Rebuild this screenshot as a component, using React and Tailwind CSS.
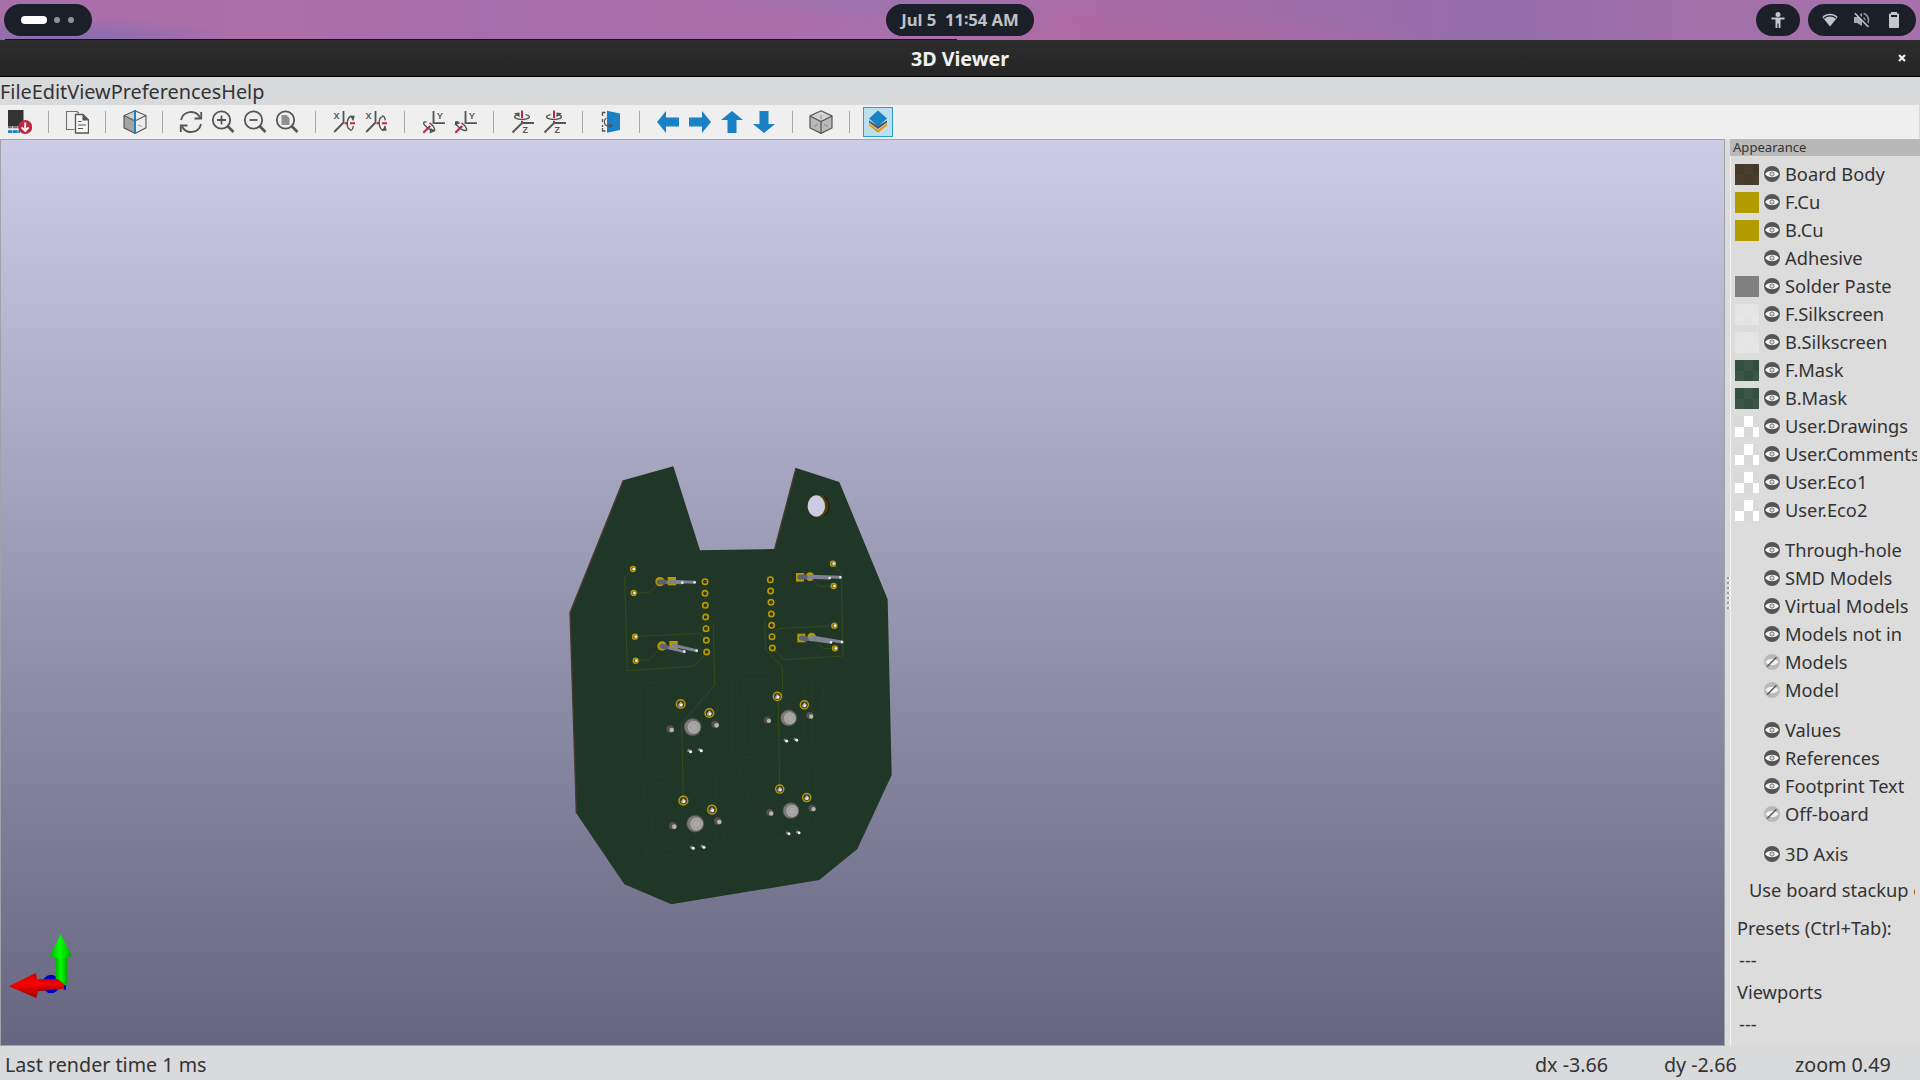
import React from "react";

const G = "#545454";
const RED = "#bf2641";
const BLUE = "#1a81c4";

function Icon({ children, className = "" }) {
  return (
    <svg width="24" height="24" viewBox="0 0 24 24" fill="none" className={"shrink-0 " + className}>
      {children}
    </svg>
  );
}

const ReloadBoard = () => (
  <Icon>
    <path d="M0 0H15.500V16H0Z" fill="#333" />
    <path d="M0 16H13V18.300H0Z" fill="#777" />
    <path d="M0 20.200H12V23H0Z" fill={BLUE} />
    <path d="M4.500 16V23M10 16V23" stroke="#efefef" strokeWidth=".6" />
    <circle cx="17.200" cy="17" r="7" fill={RED} />
    <path d="M17.200 12.500V20.500M13.700 17.300L17.200 20.800L20.700 17.300" stroke="#fff" strokeWidth="1.900" />
  </Icon>
);

const CopyDoc = () => (
  <Icon>
    <path d="M9.500 19.500H1.500V1.500H12L14 3.500" stroke="#707070" strokeWidth="1.100" />
    <path d="M10.500 4.500H18L23.500 10V23H10.500Z" fill="#f7f7f7" stroke={G} strokeWidth="1.300" />
    <path d="M17.500 4.500V10.500H23.500Z" fill={G} />
    <path d="M13 11.500H16.500M13 15H21M13 18.500H18" stroke={G} strokeWidth="1.100" />
  </Icon>
);

const RaytraceCube = () => (
  <Icon className="ml-px">
    <path d="M12 .8L23 5.500V17.800L12 23.400L1 17.800V5.500Z" fill="#ececec" />
    <path d="M1 5.500L12 11V23.400L1 17.800Z" fill="#a3a3a3" />
    <path d="M12 .8L1 5.500L12 11Z" fill="#cfcfcf" />
    <path d="M12 .8L23 5.500V17.800L12 23.400L1 17.800V5.500ZM1 5.500L12 11L23 5.500" stroke={G} strokeWidth="1.100" />
    <path d="M15 15L19 16.500" stroke="#999" />
    <path d="M12 0V24" stroke={BLUE} strokeWidth="2" />
  </Icon>
);

const Refresh = () => (
  <Icon>
    <path d="M2 10A10.200 10.200 0 0 1 21 7.500M22 14A10.200 10.200 0 0 1 3 16.500" stroke={G} strokeWidth="1.800" />
    <path d="M22.200 2V8.500H15.500M1.800 22V15.500H8.500" stroke={G} strokeWidth="1.800" />
  </Icon>
);

const Lens = ({ children }) => (
  <Icon>
    <circle cx="10.500" cy="10" r="8.700" stroke={G} strokeWidth="1.800" />
    <path d="M16.500 16L22.500 22" stroke={G} strokeWidth="2.600" />
    {children}
  </Icon>
);

const AxisText = ({ x, y, children }) => (
  <text x={x} y={y} fill={G} fontSize="9.500" fontWeight="600" fontFamily="'Noto Sans', sans-serif">{children}</text>
);

const RotX = ({ flip }) => (
  <Icon className="ml-0.5">
    <path d="M10.500 1V13M10.500 12.500L1.200 22" stroke={G} strokeWidth="1.800" />
    <path d="M11.500 13.200H14.500M17 13.200H22" stroke={RED} strokeWidth="1.900" />
    <g transform={flip ? "matrix(1 0 0 -1 0 26.400)" : undefined}>
      <path d="M17.500 19.500C14.500 19.500 13.800 15 14.300 12C14.800 8.500 16.500 6 18.500 6.800C19.500 7.300 20 9 20.200 10.500M17 20.500C18.500 20.500 20 19 20.300 16" stroke={G} strokeWidth="1.400" />
      <path d="M16.500 5.500L21.800 5.800L20.300 10.500Z" fill={G} />
    </g>
    <AxisText x="0.500" y="9">X</AxisText>
  </Icon>
);

const RotY = ({ flip }) => (
  <Icon>
    <path d="M12.500 1V13.200H24" stroke={G} strokeWidth="1.800" />
    <path d="M9.300 16L2.300 22.800" stroke={RED} strokeWidth="2" />
    <path d="M5.500 12C2.500 11.500 1.500 13 4 15.500C6.500 18 10.500 21 13 20.500C15 20 12.500 15.500 8.500 12.800" stroke={G} strokeWidth="1.400" />
    {flip ? <path d="M1.500 15.500L2.500 11L7.500 13Z" fill={G} /> : <path d="M8.500 23.500L9.500 18L14.500 21Z" fill={G} />}
    <AxisText x="16" y="9">Y</AxisText>
  </Icon>
);

const RotZ = ({ flip }) => (
  <Icon className="ml-px">
    <path d="M11.500 13H23M11.500 12.500L1.500 22.500" stroke={G} strokeWidth="1.800" />
    <path d="M11 .5V8M11 11V14" stroke={RED} strokeWidth="2" />
    <g transform={flip ? "matrix(-1 0 0 1 22 0)" : undefined}>
      <path d="M7.500 4.600C4 5 2.500 6.500 4.500 8.200C7.500 10 14.500 10 17.500 8.200C19.500 6.800 18 5.200 14.500 4.600" stroke={G} strokeWidth="1.400" />
      <path d="M3 3.200L8.500 2.500V7.300Z" fill={G} />
    </g>
    <AxisText x="11.500" y="22.500">Z</AxisText>
  </Icon>
);

const FlipBoard = () => (
  <Icon>
    <path d="M6.500 2.500H3.500V6M3.500 9V12M3.500 15V17M3.500 18V21H6.500" stroke={G} strokeWidth="1.300" />
    <path d="M7.500 8C4.500 9.500 4.500 14.500 8 16" stroke={G} strokeWidth="1.200" />
    <path d="M8 .8L21 3.500V20L8 22.800Z" fill={BLUE} />
    <path d="M8 15.600H14M10 14.200V17.500L14 15.600Z" stroke={G} strokeWidth=".9" fill={G} />
  </Icon>
);

const Arrow = ({ turn }) => (
  <Icon>
    <path d="M1 12L10 1V7.500H23V16.500H10V23Z" fill={BLUE} transform={`rotate(${turn} 12 12)`} />
  </Icon>
);

const OrthoCube = () => (
  <Icon>
    <path d="M12 .8L23 6V18L12 23.400L1 18V6Z" fill="#b9b9b9" />
    <path d="M12 .8L23 6L12 11.500L1 6Z" fill="#d2d2d2" />
    <path d="M12 .8L23 6V18L12 23.400L1 18V6ZM1 6L12 11.500L23 6M12 11.500V23.400" stroke={G} strokeWidth="1.200" />
    <path d="M12 5V9M5 16.500L9 14.500M19 16.500L15 14.500" stroke="#8c8c8c" />
  </Icon>
);

const Layers = () => (
  <Icon>
    <path d="M3 13.500L12 20L21 13.500V15.500L12 22.800L3 15.500Z" fill="#f29100" />
    <path d="M3 10.500L12 16L21 10.500V12.500L12 19L3 12.500Z" fill={G} />
    <path d="M12 .5L21 8.500L12 16.500L3 8.500Z" fill={BLUE} />
  </Icon>
);

const Tool = ({ children }) => <div className="flex h-8 w-8 shrink-0 items-center justify-center">{children}</div>;
const Sep = () => (
  <div className="flex w-[25px] shrink-0 justify-center">
    <div className="h-[22px] w-px bg-[#a8a8a8]" />
  </div>
);

const Eye = ({ off }) =>
  off ? (
    <svg width="16" height="16" viewBox="0 0 16 16" className="shrink-0">
      <circle cx="8" cy="8" r="8" fill="#b8b8b8" />
      <path d="M1.500 8C4 3.800 12 3.800 14.500 8C12 12.200 4 12.200 1.500 8Z" fill="#f1f1f1" />
      <path d="M3.300 12.500L12.500 3.300" stroke="#505050" strokeWidth="1.300" />
    </svg>
  ) : (
    <svg width="16" height="16" viewBox="0 0 16 16" className="shrink-0">
      <circle cx="8" cy="8" r="8" fill="#545454" />
      <path d="M1.200 8C4 3.700 12 3.700 14.800 8C12 12.300 4 12.300 1.200 8Z" fill="#f6f6f6" />
      <circle cx="8" cy="8" r="2.100" fill="#eee" stroke="#6a6a6a" strokeWidth="1" />
      <circle cx="8" cy="8" r=".8" fill="#bbb" />
    </svg>
  );

function Swatch({ colors }) {
  if (!colors) return <div className="h-[21px] w-6 shrink-0" />;
  const [a, b] = colors;
  return (
    <svg width="24" height="21" viewBox="0 0 24 21" className="shrink-0" shapeRendering="crispEdges">
      <rect width="24" height="21" fill={a} />
      <path d="M9 0H18V11H9ZM0 11H9V21H0ZM18 11H24V21H18Z" fill={b} />
    </svg>
  );
}

const layers = [
  ["Board Body", ["#433a29", "#483f2e"]],
  ["F.Cu", ["#b39c00", "#b39c00"]],
  ["B.Cu", ["#b39c00", "#b39c00"]],
  ["Adhesive", null],
  ["Solder Paste", ["#808080", "#808080"]],
  ["F.Silkscreen", ["#e4e4e4", "#e6e6e6"]],
  ["B.Silkscreen", ["#e4e4e4", "#e6e6e6"]],
  ["F.Mask", ["#344e40", "#3b5547"]],
  ["B.Mask", ["#344e40", "#3b5547"]],
  ["User.Drawings", ["#d9d9d9", "#ffffff"]],
  ["User.Comments", ["#d9d9d9", "#ffffff"]],
  ["User.Eco1", ["#d9d9d9", "#ffffff"]],
  ["User.Eco2", ["#d9d9d9", "#ffffff"]],
];
const models = [["Through-hole"], ["SMD Models"], ["Virtual Models"], ["Models not in"], ["Models", true], ["Model", true]];
const texts = [["Values"], ["References"], ["Footprint Text"], ["Off-board", true]];

function Row({ label, colors, off }) {
  return (
    <div className="flex h-7 items-center overflow-hidden">
      <Swatch colors={colors} />
      <div className="ml-[5px] flex">
        <Eye off={off} />
      </div>
      <span className="ml-[5px] whitespace-nowrap">{label}</span>
    </div>
  );
}

const pads = [
  [465, 395], [465, 430], [466, 466], [467, 501], [468, 536], [469, 571], [470, 606],
  [661, 389], [662, 423], [663, 457], [664, 492], [665, 526], [666, 560], [667, 594],
];
const vias = [[249, 357], [251, 429], [255, 560], [257, 632], [849, 341], [851, 408], [853, 527], [855, 595]];
const switches = [[428, 831], [716, 804], [436, 1121], [723, 1082]];

const KeySwitch = ({ x, y, s }) => (
  <g transform={`translate(${x} ${y}) scale(${s})`}>
    <circle cx="0" cy="0" r="26" fill="#7c7a79" />
    <circle cx="-1" cy="0" r="25" fill="none" stroke="#44403c" strokeWidth="2" />
    <circle cx="4" cy="1" r="19" fill="#a9a8a7" />
    <circle cx="4" cy="1" r="12" fill="none" stroke="#8b8a8a" strokeWidth="2" strokeDasharray="8 3" />
    {[[-68, 6], [67, -8]].map(([a, b], i) => (
      <g key={i}>
        <circle cx={a} cy={b} r="11" fill="#55504d" />
        <circle cx={a + 5} cy={b + 3} r="7" fill="#b5b4b3" />
      </g>
    ))}
    {[[-36, -69], [50, -42]].map(([a, b], i) => (
      <g key={i}>
        <circle cx={a} cy={b} r="13" fill="#3c382b" stroke="#b39c00" strokeWidth="4.500" />
        <path d={`M${a - 8} ${b + 3}L${a} ${b - 8}L${a + 8} ${b}L${a + 4} ${b + 8}L${a - 5} ${b + 8}Z`} fill="#a8a5a3" />
        <circle cx={a + 2} cy={b + 3} r="4" fill="#f2f2f2" />
      </g>
    ))}
    {[[-9, 72], [23, 69]].map(([a, b], i) => (
      <g key={i}>
        <path d={`M${a - 6} ${b - 3}L${a + 3} ${b + 2}`} stroke="#83879b" strokeWidth="8" />
        <circle cx={a + 3} cy={b + 2} r="4.500" fill="#f5f5f5" />
      </g>
    ))}
  </g>
);

const Outline = ({ d }) => <path d={d} stroke="#29402f" strokeWidth="5" fill="none" />;

const Board = () => (
  <svg width="360" height="470" viewBox="0 0 1080 1410" className="absolute left-[549px] top-[310px]">
    <path d="M220 91L370 49L450 301L674 297L738 54L868 96L1013 448L1025 975L922 1197L808 1290L364 1363L223 1303L79 1090L60 488Z" fill="#203727" />
    <path d="M79 1090L60 488L220 91M674 297L738 54" fill="none" stroke="#4b3a32" strokeWidth="4" />
    <g opacity=".32">
      <Outline d="M272 700L545 672V915L275 945ZM290 715L520 690V895L292 925ZM310 735L500 715V870L312 900Z" />
      <Outline d="M562 670L818 660L822 905L565 925ZM580 690L785 682V888L585 908ZM600 705L765 695V860L605 880Z" />
      <Outline d="M280 985L515 955L520 1200L292 1222ZM300 1005L495 975V1180L310 1200Z" />
      <Outline d="M570 950L795 935L800 1155L578 1180ZM590 970L775 955V1135L600 1150Z" />
    </g>
    <g fill="#243524" opacity=".6">
      <circle cx="325" cy="393" r="40" />
      <circle cx="722" cy="380" r="30" />
      <circle cx="722" cy="564" r="30" />
      <circle cx="325" cy="588" r="36" />
    </g>
    <path
      d="M249 357L224 384L232 662L432 649L470 606M251 429L299 428L330 395M255 560L448 550L470 571M257 631L299 629L335 588M467 501L490 524L494 706L395 820L400 1050M849 341L874 368L879 618L703 629L667 594M851 408L808 409L780 380M853 527L687 536L666 560M855 595L818 595L785 560M664 492L644 514L647 601L697 650L698 740L685 762L689 1015"
      fill="none" stroke="#374a1a" strokeWidth="2.800"
    />
    <ellipse cx="803" cy="168" rx="31" ry="34" fill="#4c4108" />
    <path d="M822 140A31 34 0 0 1 824 196" stroke="#2e1f08" strokeWidth="5" fill="none" />
    <ellipse cx="799" cy="168" rx="26" ry="32" fill="#cccbe2" />
    {pads.map(([x, y]) => (
      <g key={x + "-" + y}>
        <circle cx={x} cy={y} r="8" fill="#2b2410" stroke="#b39c00" strokeWidth="5" />
        <circle cx={x + 1} cy={y} r="2.500" fill="#5d4a1c" />
      </g>
    ))}
    {vias.map(([x, y]) => (
      <g key={x + "-" + y}>
        <circle cx={x} cy={y} r="7.500" fill="#6c6034" stroke="#b39c00" strokeWidth="4" />
        <circle cx={x + 2} cy={y} r="4" fill="#eceaea" />
      </g>
    ))}
    <rect x="353" y="381" width="25" height="25" fill="#b39c00" />
    <circle cx="330" cy="395" r="14" fill="#b39c00" />
    <rect x="358" y="573" width="25" height="25" fill="#b39c00" />
    <circle cx="336" cy="588" r="14" fill="#b39c00" />
    <rect x="738" y="369" width="24" height="26" fill="#b39c00" />
    <circle cx="780" cy="380" r="13" fill="#b39c00" />
    <rect x="742" y="551" width="24" height="26" fill="#b39c00" />
    <circle cx="785" cy="561" r="13" fill="#b39c00" />
    <g fill="none" strokeLinecap="round">
      <g stroke="#7e8292" strokeWidth="9">
        <path d="M365 394L433 397M330 396L395 398" />
        <path d="M370 586L440 602M338 589L402 605" />
        <path d="M782 379L870 382M750 381L838 384" />
        <path d="M785 561L876 576M754 564L842 577" />
      </g>
      <path d="M328 396H342M336 589L348 591M750 381H765M754 564L768 567" stroke="#5d6170" strokeWidth="15" />
      <path d="M434 397H434M397 398H397M440 602H440M403 605H403M871 382H871M839 384H839M876 576H876M843 577H843" stroke="#e6e6ee" strokeWidth="8" />
    </g>
    {switches.map(([x, y], i) => (
      <KeySwitch key={i} x={x} y={y} s={i % 2 ? 0.94 : 1} />
    ))}
  </svg>
);

const Axes = () => (
  <svg width="70" height="70" viewBox="0 0 210 210" className="absolute left-[4px] top-[791px]">
    <defs>
      <linearGradient id="ax-g" x1="0" x2="1"><stop offset="0" stopColor="#00b400" /><stop offset=".45" stopColor="#00ff00" /><stop offset="1" stopColor="#00a800" /></linearGradient>
      <linearGradient id="ax-r" x1="0" x2="0" y1="0" y2="1"><stop offset="0" stopColor="#c80000" /><stop offset=".4" stopColor="#ff0000" /><stop offset="1" stopColor="#a00000" /></linearGradient>
    </defs>
    <ellipse cx="138" cy="159" rx="26" ry="28" fill="#0000c0" />
    <path d="M176 160H183V175L176 178Z" fill="#0000c0" />
    <path d="M152 75H186V155L182 164L152 150Z" fill="url(#ax-g)" />
    <path d="M167 10L201 75Q167 86 134 77Z" fill="url(#ax-g)" />
    <path d="M98 145L158 144L178 160L174 173L98 181Z" fill="url(#ax-r)" />
    <path d="M11 166L92 126Q106 165 94 201Z" fill="url(#ax-r)" />
  </svg>
);

function TopBar() {
  return (
    <div className="relative flex h-10 shrink-0 items-center justify-between bg-[linear-gradient(90deg,#a66fa9_0%,#ae6ea9_14%,#a66dac_25%,#ab6daa_40%,#a771ad_46%,#ab6ba6_56%,#9f6ca8_67%,#946dab_78%,#a26fa9_88%,#a671ab_100%)] px-1">
      <div className="absolute inset-0 bg-[radial-gradient(ellipse_170px_22px_at_70px_40px,#7a6cb4cc,transparent),radial-gradient(ellipse_200px_20px_at_890px_0px,#8d74b088,transparent),radial-gradient(ellipse_300px_24px_at_1160px_40px,#b8669e77,transparent)]" />
      <div className="absolute bottom-0 left-[5px] h-px w-[952px] bg-[#1a1018]" />
      <div className="relative flex h-8 w-[88px] items-center gap-2 rounded-full bg-[#1b1f27] pl-[17px]">
        <div className="h-2 w-[26px] rounded-full bg-white" />
        <div className="-ml-px h-1.5 w-1.5 rounded-full bg-[#909296]" />
        <div className="h-1.5 w-1.5 rounded-full bg-[#909296]" />
      </div>
      <div className="absolute left-[886px] top-1 flex h-8 w-[148px] items-center justify-center whitespace-pre rounded-full bg-[#1b1f27] pb-px text-[16.7px] font-bold text-[#c0c2c5]">
        {"Jul 5  11∶54 AM"}
      </div>
      <div className="relative flex gap-2">
        <div className="flex h-8 w-11 items-center justify-center rounded-full bg-[#1b1f27]">
          <svg width="16" height="16" viewBox="0 0 16 16" fill="#c4c6c9" className="-ml-px">
            <circle cx="8" cy="2.500" r="2.500" />
            <path d="M1.500 5.500H14.500V7.500H10.500V16H8.600V11.500H7.400V16H5.500V7.500H1.500Z" />
          </svg>
        </div>
        <div className="flex h-8 w-[108px] items-center gap-4 rounded-full bg-[#1b1f27] pl-[14px]">
          <svg width="16" height="16" viewBox="0 0 16 16">
            <path d="M8 14.500L.3 5C4.500 .7 11.500 .7 15.700 5Z" fill="#c4c6c9" />
            <path d="M2 6.200C5.500 3.200 10.500 3.200 14 6.200" stroke="#1b1f27" strokeWidth="1.200" fill="none" />
          </svg>
          <svg width="16" height="16" viewBox="0 0 16 16">
            <path d="M0 5H3L8 1V14L3 11H0Z" fill="#a9abae" />
            <path d="M9.500 5.500C11 7 11 9 9.800 10.500M9.500 1.500C15 3 15.800 10 12.500 13" stroke="#8f9194" strokeWidth="1.700" fill="none" />
            <path d="M2 .5L16 14.500" stroke="#1b1f27" strokeWidth="2" />
            <path d="M.8 1.300L14.500 15" stroke="#c4c6c9" strokeWidth="1.600" />
          </svg>
          <svg width="16" height="16" viewBox="0 0 16 16" fill="#c4c6c9">
            <path d="M5 0H11V1.500H12Q13 1.500 13 2.500V15Q13 16 12 16H4Q3 16 3 15V2.500Q3 1.500 4 1.500H5Z" />
            <path d="M5 3H11V5H5Z" fill="#1b1f27" />
          </svg>
        </div>
      </div>
    </div>
  );
}

export default function App() {
  return (
    <div className="flex h-[1080px] w-[1920px] flex-col overflow-hidden bg-[#d9dadc] font-['Noto_Sans',sans-serif] text-[#333]">
      <TopBar />
      <div className="relative flex h-[37px] shrink-0 items-center justify-center border-b border-black bg-linear-to-b from-[#2d2d2d] to-[#252525] pt-0.5 text-[19.7px] font-bold leading-none text-[#f0f0ee]">
        3D Viewer
        <svg width="8" height="8" viewBox="0 0 8 8" className="absolute right-[14px] top-[14px]">
          <path d="M1 1L7 7M7 1L1 7" stroke="#f2f2f2" strokeWidth="2.200" />
        </svg>
      </div>
      <div className="flex h-7 shrink-0 items-center pt-0.5 text-[19.85px] leading-none">
        <span>File</span><span>Edit</span><span>View</span><span>Preferences</span><span>Help</span>
      </div>
      <div className="mr-px flex h-[34px] shrink-0 items-center bg-[#efefef] pl-1">
        <Tool><ReloadBoard /></Tool>
        <Sep />
        <Tool><CopyDoc /></Tool>
        <Sep />
        <Tool><RaytraceCube /></Tool>
        <Sep />
        <Tool><Refresh /></Tool>
        <Tool><Lens><path d="M10.500 5.500V14.500M6 10H15" stroke={G} strokeWidth="1.800" /></Lens></Tool>
        <Tool><Lens><path d="M6.500 10H14.500" stroke={G} strokeWidth="1.800" /></Lens></Tool>
        <Tool><Lens><path d="M6.500 5H11.500L14.500 8V15H6.500Z" fill="#8f8f8f" /></Lens></Tool>
        <Sep />
        <Tool><RotX /></Tool>
        <Tool><RotX flip /></Tool>
        <Sep />
        <Tool><RotY /></Tool>
        <Tool><RotY flip /></Tool>
        <Sep />
        <Tool><RotZ /></Tool>
        <Tool><RotZ flip /></Tool>
        <Sep />
        <Tool><FlipBoard /></Tool>
        <Sep />
        <Tool><Arrow turn={0} /></Tool>
        <Tool><Arrow turn={180} /></Tool>
        <Tool><Arrow turn={90} /></Tool>
        <Tool><Arrow turn={270} /></Tool>
        <Sep />
        <Tool><OrthoCube /></Tool>
        <Sep />
        <div className="ml-px flex h-[30px] w-[30px] items-center justify-center border border-[#2a9fc9] bg-[#bbdfec]">
          <Layers />
        </div>
      </div>
      <div className="flex h-[907px] shrink-0">
        <div className="relative w-[1725px] shrink-0 overflow-hidden border border-[#a2a2a2] bg-linear-to-b from-[#cccce6] to-[#666680]">
          <Board />
          <Axes />
        </div>
        <div className="flex w-[5px] shrink-0 flex-col items-center justify-center gap-[3px] bg-[#dcdcdc]">
          {[0, 1, 2, 3, 4, 5, 6].map((i) => (
            <div key={i} className="h-0.5 w-0.5 bg-[#9a9a9a] shadow-[1px_0_0_#fff]" />
          ))}
        </div>
        <div className="flex w-[190px] shrink-0 flex-col overflow-hidden bg-[#dcdcdc] text-[18.28px] leading-none">
          <div className="flex h-[17px] shrink-0 items-center bg-[#b9b9b9] pl-[3px] text-[13.1px]">Appearance</div>
          <div className="flex grow flex-col border-l border-[#f2f2f2] pl-1 pr-[3px] pt-1">
            {layers.map(([l, c]) => <Row key={l} label={l} colors={c} />)}
            <div className="h-3" />
            {models.map(([l, o]) => <Row key={l} label={l} off={o} />)}
            <div className="h-3" />
            {texts.map(([l, o]) => <Row key={l} label={l} off={o} />)}
            <div className="h-3" />
            <Row label="3D Axis" />
            <div className="mr-0.5 mt-2 flex h-7 items-center overflow-hidden whitespace-nowrap pl-[14px]">Use board stackup colors</div>
            <div className="mt-[10px] flex h-7 items-center pl-[2px]">Presets (Ctrl+Tab):</div>
            <div className="mt-1 flex h-7 items-center pl-[4px]">---</div>
            <div className="mt-1 flex h-7 items-center pl-[2px]">Viewports</div>
            <div className="mt-1 flex h-7 items-center pl-[4px]">---</div>
          </div>
        </div>
      </div>
      <div className="flex h-[34px] shrink-0 items-center pt-[3px] text-[19.7px] leading-none">
        <span className="w-[1530px] pl-[5px]">Last render time 1 ms</span>
        <span className="w-[134px] pl-[5px]">dx -3.66</span>
        <span className="w-[131px]">dy -2.66</span>
        <span>zoom 0.49</span>
      </div>
    </div>
  );
}
